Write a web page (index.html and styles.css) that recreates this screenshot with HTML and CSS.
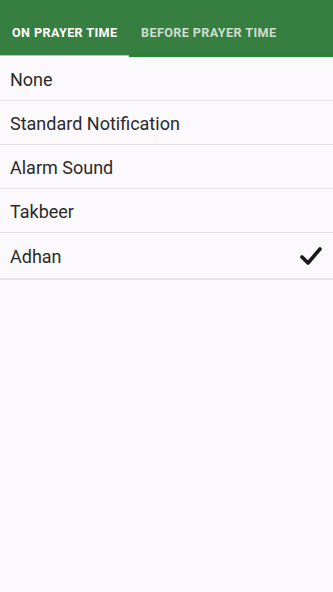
FILE: index.html
```html
<!DOCTYPE html>
<html>
<head>
  <title>Notification</title>
  <link rel="stylesheet" href="styles.css">
</head>
<body>
  <div class="tabs">
    <div class="tab active">ON PRAYER TIME</div>
    <div class="tab">BEFORE PRAYER TIME</div>
  </div>
  <ul class="options">
    <li>None</li>
    <li>Standard Notification</li>
    <li>Alarm Sound</li>
    <li>Takbeer</li>
    <li class="selected">Adhan
      <svg class="check" width="22" height="20" viewBox="0 0 22 20">
        <path d="M2 11 L8 17 L20 3" fill="none" stroke="#1a1a1a" stroke-width="3.6" stroke-linecap="round" stroke-linejoin="round"/>
      </svg>
    </li>
  </ul>
</body>
</html>
```
FILE: styles.css
```css
body {
  margin: 0;
  background: #fbf9fc;
  font-family: Roboto, "Noto Sans", sans-serif;
}
.tabs {
  display: flex;
  background: #367f40;
  height: 55px;
}
.tab {
  font-size: 12.6px;
  font-weight: bold;
  letter-spacing: 0.4px;
  color: #cfdcd0;
  padding: 0 11px 0 12px;
  line-height: 65px;
  height: 57px;
  box-sizing: border-box;
  white-space: nowrap;
}
.tab.active {
  color: #ffffff;
  width: 129px;
  height: 56px;
  border-bottom: 1px solid #a6d3a6;
}
.tab:last-child {
  flex: 1;
  border-bottom: 2px solid #1e8a2c;
}
.options {
  list-style: none;
  margin: 0;
  padding: 0;
  margin-top: 2px;
}
.options li {
  display: flex;
  align-items: center;
  justify-content: space-between;
  padding: 1px 10px 0 10px;
  box-sizing: border-box;
  height: 44px;
  font-size: 18px;
  color: #2a2a2a;
  border-bottom: 1px solid #e5e3e7;
}
.options li.selected {
  height: 47px;
  border-bottom: 2px solid #e7e5e9;
}
.check {
  margin-right: 1px;
  margin-top: -1px;
}
```
